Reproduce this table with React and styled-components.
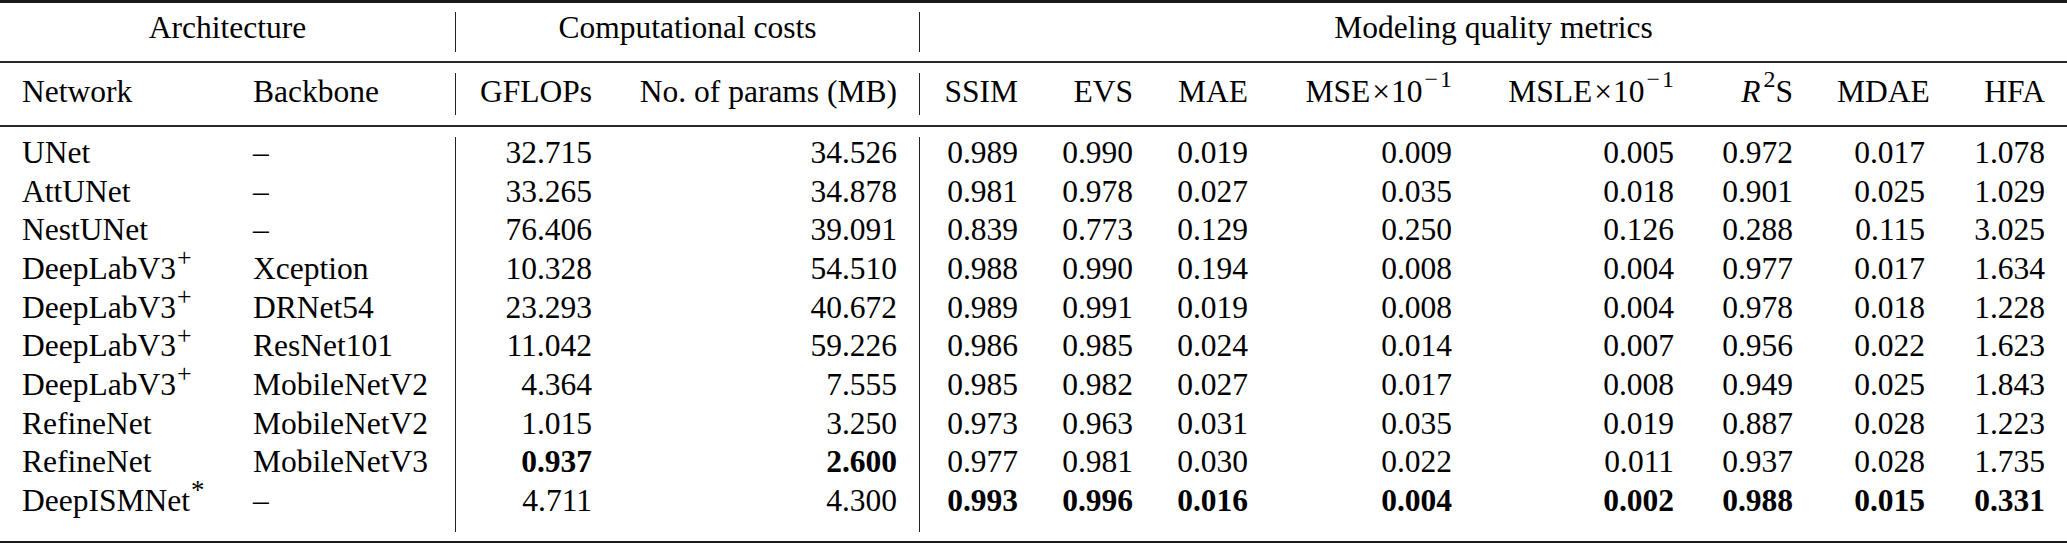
import React from 'react'
import styled, { createGlobalStyle } from 'styled-components'

const GlobalStyle = createGlobalStyle`
  body {
    margin: 0;
    background: #fff;
  }
`

// column widths taken from the reference, padding included
const COLUMNS = '231px 224px 159px 305px 121px 115px 115px 204px 222px 119px 132px 120px'

const Table = styled.div`
  width: 2067px;
  font-family: "Liberation Serif", "Times New Roman", serif;
  font-size: 31.5px;
  color: #000;
`

const Rule = styled.div`
  height: ${p => p.$size}px;
  background: ${p => (p.$size > 2 ? '#1a1a1a' : '#2a2a2a')};
`

const Band = styled.div`
  display: grid;
  grid-template-columns: ${COLUMNS};
  padding-top: ${p => p.$top}px;
  padding-bottom: ${p => p.$bottom}px;
`

const Cell = styled.div`
  grid-column: span ${p => p.$span || 1};
  padding: ${p => p.$pt || 0}px 22px ${p => p.$pb}px 22px;
  line-height: 32px;
  white-space: nowrap;
  text-align: ${p => p.$align || 'right'};
  font-weight: ${p => (p.$bold ? 700 : 400)};
  border-left: ${p => (p.$sep ? '1px solid #222' : '0')};
`

const Sup = styled.sup`
  font-size: ${p => p.$scale || 0.72}em;
  line-height: 0;
  vertical-align: baseline;
  position: relative;
  top: ${p => p.$lift || -0.62}em;
  margin-left: ${p => p.$gap || 0}px;
`

const Minus = styled.span`
  margin-right: 2px;
`

const Times = styled.span`
  margin: 0 1px 0 2px;
`

const Italic = styled.i`
  font-style: italic;
`

const rows = [
  ['UNet', null, '–', '32.715', '34.526', '0.989', '0.990', '0.019', '0.009', '0.005', '0.972', '0.017', '1.078'],
  ['AttUNet', null, '–', '33.265', '34.878', '0.981', '0.978', '0.027', '0.035', '0.018', '0.901', '0.025', '1.029'],
  ['NestUNet', null, '–', '76.406', '39.091', '0.839', '0.773', '0.129', '0.250', '0.126', '0.288', '0.115', '3.025'],
  ['DeepLabV3', '+', 'Xception', '10.328', '54.510', '0.988', '0.990', '0.194', '0.008', '0.004', '0.977', '0.017', '1.634'],
  ['DeepLabV3', '+', 'DRNet54', '23.293', '40.672', '0.989', '0.991', '0.019', '0.008', '0.004', '0.978', '0.018', '1.228'],
  ['DeepLabV3', '+', 'ResNet101', '11.042', '59.226', '0.986', '0.985', '0.024', '0.014', '0.007', '0.956', '0.022', '1.623'],
  ['DeepLabV3', '+', 'MobileNetV2', '4.364', '7.555', '0.985', '0.982', '0.027', '0.017', '0.008', '0.949', '0.025', '1.843'],
  ['RefineNet', null, 'MobileNetV2', '1.015', '3.250', '0.973', '0.963', '0.031', '0.035', '0.019', '0.887', '0.028', '1.223'],
  ['RefineNet', null, 'MobileNetV3', '0.937', '2.600', '0.977', '0.981', '0.030', '0.022', '0.011', '0.937', '0.028', '1.735'],
  ['DeepISMNet', '*', '–', '4.711', '4.300', '0.993', '0.996', '0.016', '0.004', '0.002', '0.988', '0.015', '0.331'],
]

// which numeric cells are bold, by row index -> column index (0 = GFLOPs)
const bold = {
  8: [0, 1],
  9: [2, 3, 4, 5, 6, 7, 8, 9],
}

const ROW_PB = 6.7
const LAST_PB = 14.7

export default function App() {
  return (
    <>
      <GlobalStyle />
      <Table>
        <Rule $size={2.5} />
        <Band $top={9.5} $bottom={9}>
          <Cell $span={2} $align="center" $pb={8}>Architecture</Cell>
          <Cell $span={2} $align="center" $pb={8} $sep>Computational costs</Cell>
          <Cell $span={8} $align="center" $pb={8} $sep>Modeling quality metrics</Cell>
        </Band>
        <Rule $size={1.6} />
        <Band $top={10.4} $bottom={10}>
          <Cell $align="left" $pt={3} $pb={7}>Network</Cell>
          <Cell $align="left" $pt={3} $pb={7}>Backbone</Cell>
          <Cell $pt={3} $pb={7} $sep>GFLOPs</Cell>
          <Cell $pt={3} $pb={7}>No. of params (MB)</Cell>
          <Cell $pt={3} $pb={7} $sep>SSIM</Cell>
          <Cell $pt={3} $pb={7}>EVS</Cell>
          <Cell $pt={3} $pb={7}>MAE</Cell>
          <Cell $pt={3} $pb={7}>
            MSE<Times>×</Times>10<Sup $gap={2} $scale={0.76}><Minus>−</Minus>1</Sup>
          </Cell>
          <Cell $pt={3} $pb={7}>
            MSLE<Times>×</Times>10<Sup $gap={2} $scale={0.76}><Minus>−</Minus>1</Sup>
          </Cell>
          <Cell $pt={3} $pb={7}>
            <Italic>R</Italic><Sup $gap={3} $scale={0.76}>2</Sup>S
          </Cell>
          <Cell $pt={3} $pb={7}>MDAE</Cell>
          <Cell $pt={3} $pb={7}>HFA</Cell>
        </Band>
        <Rule $size={1.6} />
        <Band $top={10.4} $bottom={9}>
          {rows.map((r, i) => {
            const pb = i === rows.length - 1 ? LAST_PB : ROW_PB
            const [net, mark, backbone, ...nums] = r
            return (
              <React.Fragment key={i}>
                <Cell $align="left" $pb={pb}>
                  {net}
                  {mark === '+' && <Sup $gap={1} $scale={0.82} $lift={-0.5}>+</Sup>}
                  {mark === '*' && <Sup $gap={1} $scale={0.85} $lift={-0.45}>*</Sup>}
                </Cell>
                <Cell $align="left" $pb={pb}>{backbone}</Cell>
                {nums.map((n, j) => (
                  <Cell
                    key={j}
                    $pb={pb}
                    $sep={j === 0 || j === 2}
                    $bold={bold[i] && bold[i].includes(j)}
                  >
                    {n}
                  </Cell>
                ))}
              </React.Fragment>
            )
          })}
        </Band>
        <Rule $size={2.5} />
      </Table>
    </>
  )
}
